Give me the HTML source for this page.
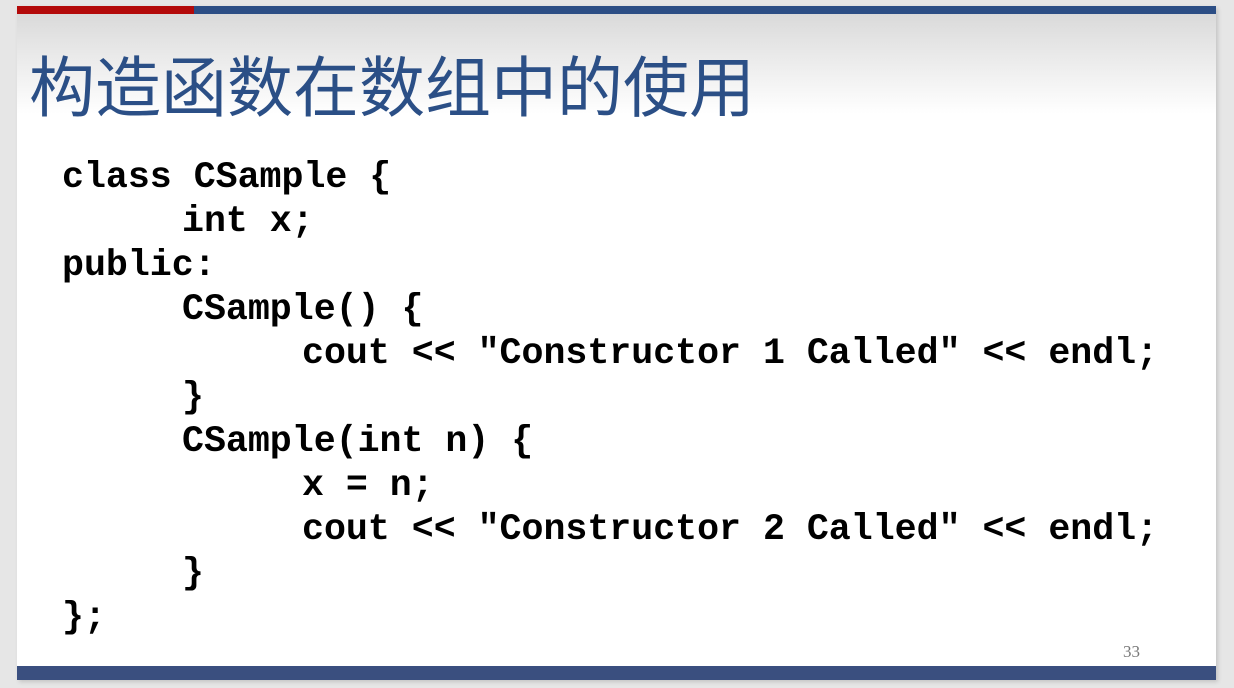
<!DOCTYPE html>
<html><head><meta charset="utf-8"><style>
body{margin:0;width:1234px;height:688px;background:#e6e6e6;position:relative;overflow:hidden}
.slide{position:absolute;left:17px;top:6px;width:1199px;height:674px;background:#fff;box-shadow:2px 2px 4px rgba(0,0,0,.15)}
.red{position:absolute;left:0;top:0;width:177px;height:8px;background:#b30a0a}
.blue{position:absolute;left:177px;top:0;right:0;height:8px;background:#2c4e85}
.grad{position:absolute;left:0;top:8px;right:0;height:100px;background:linear-gradient(#dadada,#fff)}
.title{position:absolute;left:12px;top:37px;font:66px "Noto Sans CJK SC",sans-serif;color:#2b4f86;line-height:80px;white-space:nowrap}
.code{position:absolute;left:0;top:2px;font:bold 36.6px "Liberation Mono",monospace;color:#000}
.code div{position:absolute;white-space:pre;line-height:44px}
.num{position:absolute;left:1106px;top:636px;font:17px "Liberation Serif",serif;color:#777}
.bot{position:absolute;left:0;top:660px;right:0;height:14px;background:#3a4f7f}
</style></head><body><div class="slide">
<div class="grad"></div><div class="red"></div><div class="blue"></div>
<div class="title">构造函数在数组中的使用</div>
<div class="code">
<div style="left:45px;top:148px">class CSample {</div>
<div style="left:165px;top:192px">int x;</div>
<div style="left:45px;top:236px">public:</div>
<div style="left:165px;top:280px">CSample() {</div>
<div style="left:285px;top:324px">cout &lt;&lt; "Constructor 1 Called" &lt;&lt; endl;</div>
<div style="left:165px;top:368px">}</div>
<div style="left:165px;top:412px">CSample(int n) {</div>
<div style="left:285px;top:456px">x = n;</div>
<div style="left:285px;top:500px">cout &lt;&lt; "Constructor 2 Called" &lt;&lt; endl;</div>
<div style="left:165px;top:544px">}</div>
<div style="left:45px;top:588px">};</div>
</div>
<div class="num">33</div>
<div class="bot"></div>
</div></body></html>
